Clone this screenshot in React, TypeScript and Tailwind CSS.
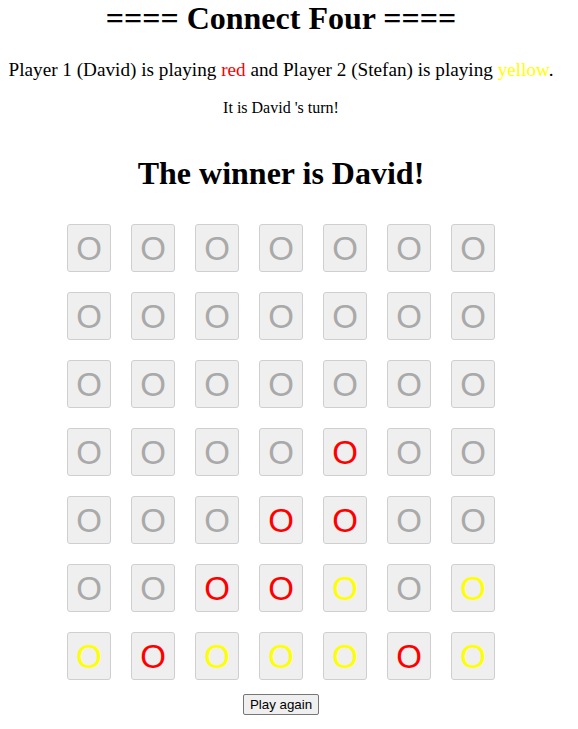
import React from "react";

type Cell = "" | "R" | "Y";

const board: Cell[][] = [
  ["", "", "", "", "", "", ""],
  ["", "", "", "", "", "", ""],
  ["", "", "", "", "", "", ""],
  ["", "", "", "", "R", "", ""],
  ["", "", "", "R", "R", "", ""],
  ["", "", "R", "R", "Y", "", "Y"],
  ["Y", "R", "Y", "Y", "Y", "R", "Y"],
];

function Slot({ value }: { value: Cell }) {
  const color =
    value === "R" ? "text-[#ff0000]" : value === "Y" ? "text-[#ffff00]" : "text-[#a9a9a9]";
  return (
    <div
      className={`w-[44px] h-[48px] flex items-center justify-center bg-[#efefef] border border-[#cfcfcf] rounded-[3px] text-[33px] leading-none font-['Liberation_Sans',Arial,sans-serif] ${color}`}
    >
      O
    </div>
  );
}

export default function App() {
  return (
    <div className="w-[562px] bg-white text-black font-['Liberation_Serif','Times_New_Roman',serif] text-center">
      <h1 className="text-[32px] font-bold leading-[36px]">==== Connect Four ====</h1>
      <p className="text-[19.2px] mt-[23px] leading-[22px]">
        Player 1 (David) is playing <span className="text-[#ff0000]">red</span> and Player 2
        (Stefan) is playing <span className="text-[#ffff00]">yellow</span>.
      </p>
      <p className="text-[16px] mt-[18px] leading-[18px]">It is David 's turn!</p>
      <h2 className="text-[32px] font-bold mt-[38px] leading-[36px]">The winner is David!</h2>

      <div className="mt-[33px] flex flex-col items-center gap-[20px]">
        {board.map((row, r) => (
          <div key={r} className="flex gap-[20px]">
            {row.map((v, c) => (
              <Slot key={c} value={v} />
            ))}
          </div>
        ))}
      </div>

      <div className="mt-[14px] flex justify-center">
        <button className="h-[21px] px-[6px] text-[13.33px] leading-none bg-[#efefef] border border-[#767676] rounded-[2px] font-['Liberation_Sans',Arial,sans-serif] text-black">
          Play again
        </button>
      </div>
    </div>
  );
}
